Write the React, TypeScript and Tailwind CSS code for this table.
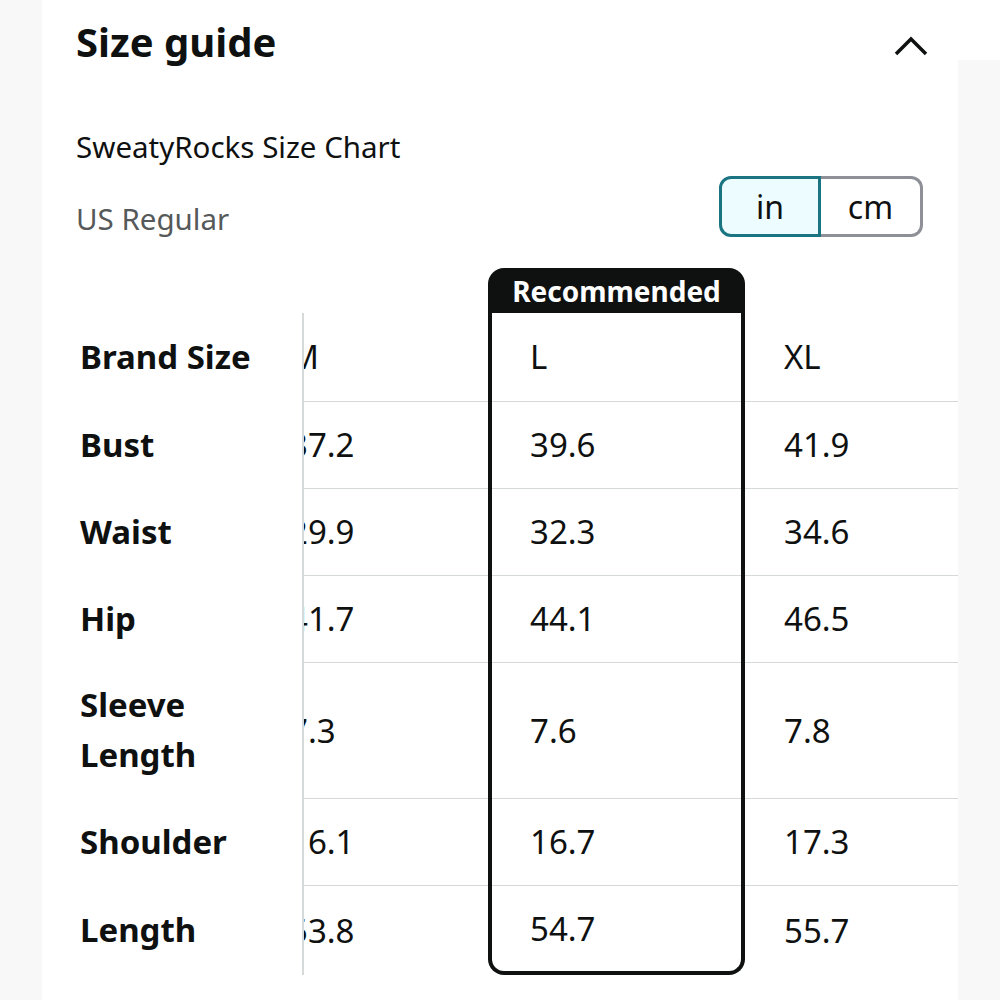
import React from "react";

const font = { fontFamily: '"Noto Sans", "Open Sans", Arial, sans-serif' };

const labels = [
  { name: "Brand Size", h: "h-[88px]" },
  { name: "Bust", h: "h-[87px]" },
  { name: "Waist", h: "h-[87px]" },
  { name: "Hip", h: "h-[87px]" },
  { name: "Sleeve Length", h: "h-[136px]" },
  { name: "Shoulder", h: "h-[87px]" },
  { name: "Length", h: "h-[90px]" },
];

const columns = [
  { size: "M", values: ["37.2", "29.9", "41.7", "7.3", "16.1", "53.8"], w: "w-[238px]" },
  { size: "L", values: ["39.6", "32.3", "44.1", "7.6", "16.7", "54.7"], w: "w-[257px]", recommended: true },
  { size: "XL", values: ["41.9", "34.6", "46.5", "7.8", "17.3", "55.7"], w: "w-[257px]" },
];

function Chevron() {
  return (
    <svg width="34" height="22" viewBox="0 0 34 22" fill="none">
      <path d="M2 19 L17 4 L32 19" stroke="#0f1111" strokeWidth="3.5" />
    </svg>
  );
}

function Column({ col }: { col: (typeof columns)[number] }) {
  const cells = [col.size, ...col.values];
  const rec = !!col.recommended;
  return (
    <div className={col.w + " shrink-0 flex flex-col"}>
      {rec ? (
        <div className="h-[45px] bg-[#0f1111] rounded-t-[16px] flex items-center justify-center text-white font-bold text-[28px]">
          Recommended
        </div>
      ) : (
        <div className="h-[45px]" />
      )}
      <div className={rec ? "border-x-4 border-b-4 border-[#0f1111] rounded-b-[16px]" : ""}>
        {cells.map((c, i) => (
          <div
            key={i}
            className={
              "flex items-center text-[33px] whitespace-nowrap text-[#0f1111] " +
              (rec ? "pl-[38px] " : "pl-[39px] ") +
              (i > 0 ? "border-t border-[#d5d9d9] " : "") +
              (rec && i === cells.length - 1 ? "h-[86px]" : labels[i].h)
            }
          >
            {c}
          </div>
        ))}
      </div>
    </div>
  );
}

export default function App() {
  return (
    <div className="w-[1000px] h-[1000px] overflow-hidden bg-[#f8f8f8] pl-[42px]" style={font}>
      <div className="bg-white flex items-start justify-between h-[60px] pt-[22px] pl-[34px] pr-[72px]">
        <h1 className="text-[40px] font-bold text-[#0f1111] leading-none">Size guide</h1>
        <div className="mt-[13px]">
          <Chevron />
        </div>
      </div>
      <div className="w-[916px] bg-white pb-[30px]">
        <div className="flex justify-between pl-[34px] pr-[35px]">
          <div className="flex flex-col">
            <div className="text-[29.5px] text-[#0f1111] h-[38px] mt-[68px] leading-[38px]">SweatyRocks Size Chart</div>
            <div className="text-[29.5px] text-[#565959] h-[38px] mt-[34px] leading-[38px]">US Regular</div>
          </div>
          <div className="flex mt-[116px] h-[61px]">
            <div className="w-[102px] flex items-center justify-center border-[3px] border-[#1b7482] bg-[#edfcfe] rounded-l-[12px] text-[32px] text-[#0f1111]">
              in
            </div>
            <div className="w-[102px] flex items-center justify-center border-[3px] border-l-0 border-[#8d9096] rounded-r-[12px] text-[32px] text-[#0f1111]">
              cm
            </div>
          </div>
        </div>
        <div className="flex mt-[30px]">
          <div className="w-[262px] shrink-0 flex flex-col">
            <div className="h-[45px]" />
            <div className="border-r-2 border-[#d5d9d9]">
              {labels.map((l) => (
                <div
                  key={l.name}
                  className={"flex items-center pl-[38px] pr-[40px] font-bold text-[33px] text-[#0f1111] leading-[50px] " + l.h}
                >
                  {l.name}
                </div>
              ))}
            </div>
          </div>
          <div className="flex-1 overflow-hidden">
            <div className="flex -ml-[54px]">
              {columns.map((c) => (
                <Column key={c.size} col={c} />
              ))}
            </div>
          </div>
        </div>
      </div>
    </div>
  );
}
